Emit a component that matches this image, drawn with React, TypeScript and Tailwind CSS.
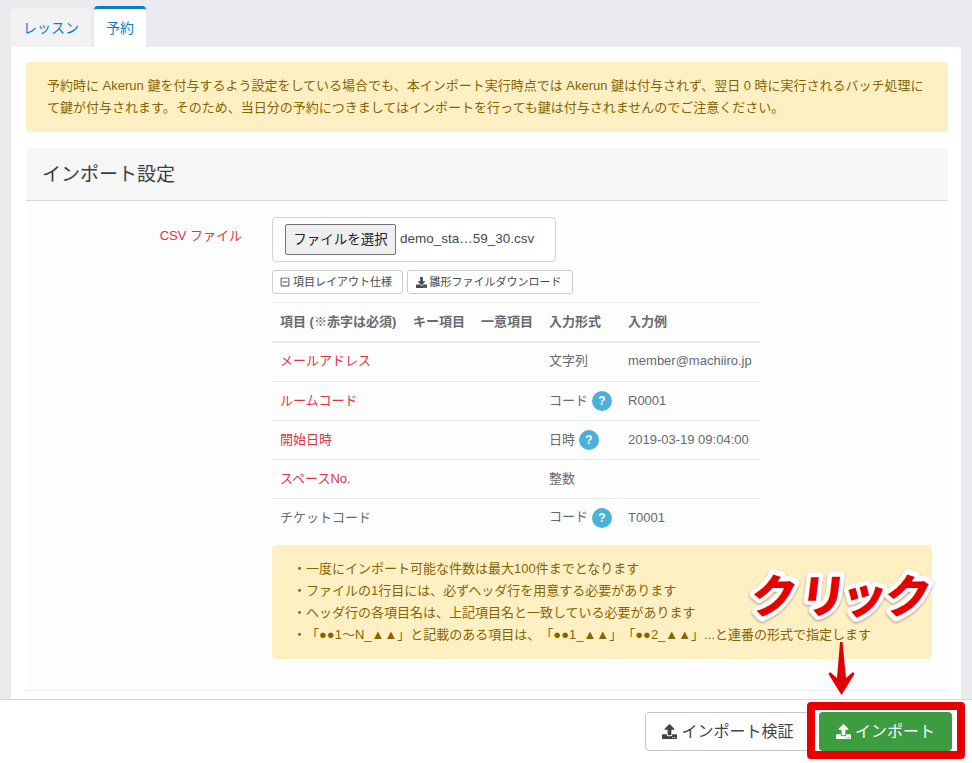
import { FaUpload, FaDownload, FaRegMinusSquare } from "react-icons/fa";

const font = { fontFamily: '"Liberation Sans", "Noto Sans CJK JP", sans-serif' };

function Help() {
  return (
    <span className="ml-[4px] inline-flex h-[20px] w-[20px] items-center justify-center rounded-full bg-[#4bb1d8] align-middle text-[12px] font-bold leading-none text-white">
      ?
    </span>
  );
}

const rows = [
  { name: "メールアドレス", req: true, type: "文字列", help: false, ex: "member@machiiro.jp", h: "h-[40px] [&>td]:pb-[2px]" },
  { name: "ルームコード", req: true, type: "コード", help: true, ex: "R0001", h: "h-[39px]" },
  { name: "開始日時", req: true, type: "日時", help: true, ex: "2019-03-19 09:04:00", h: "h-[39px]" },
  { name: "スペースNo.", req: true, type: "整数", help: false, ex: "", h: "h-[39px]" },
  { name: "チケットコード", req: false, type: "コード", help: true, ex: "T0001", h: "h-[38px]" },
];

const claimLetters = "クリック";
const claimX = "2 51 92 136";

export default function App() {
  return (
    <div style={font} className="relative flex h-[763px] w-[972px] flex-col overflow-hidden bg-[#e9ebef]">
      <main className="flex h-[699px] flex-col px-[11px]">
        <nav className="flex h-[47px] shrink-0 items-end gap-[3px]">
          <a className="flex h-[38px] w-[80px] items-center justify-center rounded-t-[3px] bg-[#f2f2f3] text-[14px] text-[#0a7cc4]">
            レッスン
          </a>
          <a className="flex h-[41px] w-[52px] items-center justify-center rounded-t-[4px] border-t-[3px] border-[#0a7cc4] bg-white text-[14px] text-[#0a7cc4]">
            予約
          </a>
        </nav>
        <section className="flex-1 bg-white pl-[15px] pr-[13px] pt-[15px]">
          <div className="h-[70px] rounded-[4px] border border-[#ffeeba] bg-[#fff0c4] px-[20px] pt-[12px] text-[13px] leading-[22px] text-[#856404]">
            予約時に Akerun 鍵を付与するよう設定をしている場合でも、本インポート実行時点では Akerun 鍵は付与されず、翌日 0 時に実行されるバッチ処理にて鍵が付与されます。そのため、当日分の予約につきましてはインポートを行っても鍵は付与されませんのでご注意ください。
          </div>
          <div className="mt-[16px] rounded-t-[6px] bg-[#fdfdfe]">
            <h2 className="flex h-[53px] items-center rounded-t-[6px] border-b border-[#d9d9dc] bg-[#f6f6f7] px-[16px] pt-[2px] text-[19px] font-normal text-[#3a3f44]">
              インポート設定
            </h2>
            <div className="flex h-[490px] border-b border-[#ebedf2] pt-[16px]">
              <label className="w-[216px] shrink-0 pt-[10px] text-right text-[13px] leading-[17px] text-[#dc3545]">
                CSV ファイル
              </label>
              <div className="ml-[30px] w-[660px]">
                <div className="flex h-[45px] w-[284px] items-center rounded-[4px] border border-[#ced4da] bg-white pl-[12px]">
                  <span className="flex h-[31px] w-[111px] items-center justify-center rounded-[2px] border border-[#767676] bg-[#efefef] pt-[1px] text-[13.5px] text-[#222]">
                    ファイルを選択
                  </span>
                  <span className="ml-[4px] text-[13.5px] text-[#444a50]">demo_sta…59_30.csv</span>
                </div>
                <div className="mt-[8px] flex gap-[4px]">
                  <span className="flex h-[24px] w-[131px] items-center justify-center gap-[3px] rounded-[3px] border border-[#c9cbcf] bg-white pr-[3px] text-[11px] text-[#444a50]">
                    <FaRegMinusSquare className="text-[10px]" />
                    項目レイアウト仕様
                  </span>
                  <span className="flex h-[24px] w-[166px] items-center justify-center gap-[3px] rounded-[3px] border border-[#c9cbcf] bg-white pr-[3px] text-[11px] text-[#444a50]">
                    <FaDownload className="text-[11px]" />
                    雛形ファイルダウンロード
                  </span>
                </div>
                <table className="mt-[8px] w-[488px] table-fixed border-collapse text-[13px] text-[#666a70]">
                  <thead>
                    <tr className="h-[39px] border-y border-b-[2px] border-[#e6e8ec] border-t-[#e9ebee] text-left font-bold">
                      <th className="w-[133px] pl-[8px]">項目 (※赤字は必須)</th>
                      <th className="w-[68px] pl-[8px]">キー項目</th>
                      <th className="w-[68px] pl-[8px]">一意項目</th>
                      <th className="w-[79px] pl-[8px]">入力形式</th>
                      <th className="pl-[8px]">入力例</th>
                    </tr>
                  </thead>
                  <tbody>
                    {rows.map((r) => (
                      <tr key={r.name} className={`${r.h} border-b border-[#e9ebee] last:border-b-0`}>
                        <td className={r.req ? "pl-[8px] text-[#dc3545]" : "pl-[8px]"}>{r.name}</td>
                        <td />
                        <td />
                        <td className="pl-[8px]">
                          {r.type}
                          {r.help && <Help />}
                        </td>
                        <td className="pl-[8px] whitespace-nowrap">{r.ex}</td>
                      </tr>
                    ))}
                  </tbody>
                </table>
                <div className="mt-[8px] h-[114px] rounded-[4px] border border-[#ffeeba] bg-[#fff0c4] pt-[12px] pl-[20px] text-[13px] leading-[22px] text-[#856404] [text-spacing-trim:space-all]">
                  <p>・一度にインポート可能な件数は最大100件までとなります</p>
                  <p>・ファイルの1行目には、必ずヘッダ行を用意する必要があります</p>
                  <p>・ヘッダ行の各項目名は、上記項目名と一致している必要があります</p>
                  <p>・「●●1〜N_▲▲」と記載のある項目は、「●●1_▲▲」「●●2_▲▲」...と連番の形式で指定します</p>
                </div>
              </div>
            </div>
          </div>
        </section>
      </main>
      <footer className="flex h-[64px] shrink-0 items-center justify-end gap-[8px] border-t border-[#d5d6d9] bg-white pr-[20px]">
        <button className="flex h-[39px] w-[166px] items-center justify-center gap-[4px] rounded-[4px] border border-[#c4c6c9] bg-white text-[16px] text-[#3f444a]">
          <FaUpload className="text-[15px]" />
          インポート検証
        </button>
        <button className="flex h-[39px] w-[133px] items-center justify-center gap-[4px] rounded-[4px] bg-[#3d9c40] text-[16px] text-white">
          <FaUpload className="text-[15px]" />
          インポート
        </button>
      </footer>

      {/* Annotation overlays */}
      <div className="absolute left-[807px] top-[702px] h-[57px] w-[158px] rounded-[4px] border-[8px] border-[#e60000]" />
      <svg className="absolute left-[828px] top-[641px]" width="28" height="55" viewBox="0 0 28 55">
        <path d="M12 1h2.5l3.5 36 7-6 1.5 2L13.5 54 .5 33l1.5-2 7 6z" fill="#e00000" />
      </svg>
      <svg className="absolute left-[745px] top-[558px] overflow-visible" width="195" height="70" viewBox="0 0 195 70">
        <g transform="translate(9 0) skewX(-7)" fontSize="46" fontWeight="900" fontFamily="'Noto Sans CJK JP', sans-serif">
          <text
            x={claimX}
            y="55"
            fill="white"
            stroke="white"
            strokeWidth="9"
            strokeLinejoin="round"
            style={{ filter: "drop-shadow(0 1px 1px rgba(0,0,0,0.4))" }}
            aria-hidden="true"
          >
            {claimLetters}
          </text>
          <text x={claimX} y="55" fill="#e60000">
            {claimLetters}
          </text>
        </g>
      </svg>
    </div>
  );
}
